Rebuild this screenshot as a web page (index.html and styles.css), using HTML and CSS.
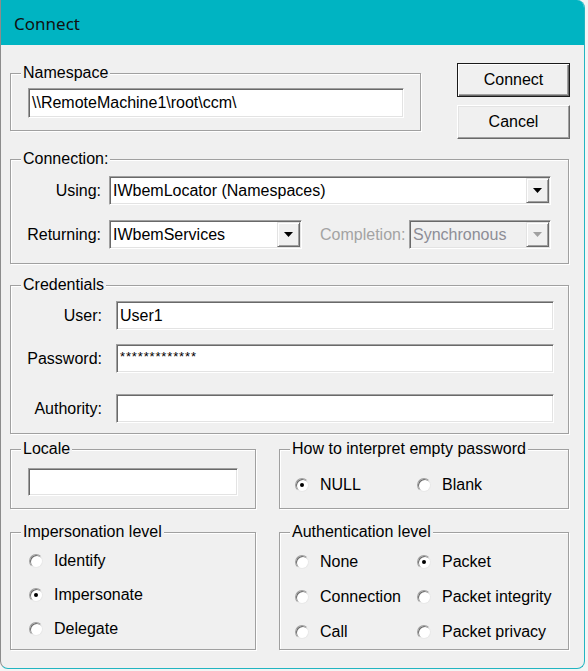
FILE: index.html
```html
<!DOCTYPE html>
<html>
<head>
<meta charset="utf-8">
<title>Connect</title>
<link rel="stylesheet" href="styles.css">
</head>
<body>
<div class="window">
  <div class="titlebar"><span class="title">Connect</span></div>
  <div class="content">
    <div class="top-row">
      <fieldset class="group ns">
        <legend>Namespace</legend>
        <div class="gbody ns-body">
          <div class="edit">\\RemoteMachine1\root\ccm\</div>
        </div>
      </fieldset>
      <div class="buttons">
        <button class="btn default">Connect</button>
        <button class="btn">Cancel</button>
      </div>
    </div>

    <fieldset class="group full conn">
      <legend>Connection:</legend>
      <div class="gbody conn-body">
        <div class="row">
          <span class="lbl">Using:</span>
          <div class="combo grow">
            <span class="ctext">IWbemLocator (Namespaces)</span>
            <span class="drop"><svg width="9" height="5" viewBox="0 0 9 5"><polygon points="0,0 9,0 4.5,5" fill="#000"/></svg></span>
          </div>
        </div>
        <div class="row">
          <span class="lbl">Returning:</span>
          <div class="combo ret">
            <span class="ctext">IWbemServices</span>
            <span class="drop"><svg width="9" height="5" viewBox="0 0 9 5"><polygon points="0,0 9,0 4.5,5" fill="#000"/></svg></span>
          </div>
          <span class="lbl-dis">Completion:</span>
          <div class="combo disabled">
            <span class="ctext">Synchronous</span>
            <span class="drop"><svg width="9" height="5" viewBox="0 0 9 5"><polygon points="0,0 9,0 4.5,5" fill="#a0a0a0"/></svg></span>
          </div>
        </div>
      </div>
    </fieldset>

    <fieldset class="group full cred">
      <legend>Credentials</legend>
      <div class="gbody cred-body">
        <div class="row">
          <span class="lbl wide">User:</span>
          <div class="edit grow">User1</div>
        </div>
        <div class="row">
          <span class="lbl wide">Password:</span>
          <div class="edit grow pw">*************</div>
        </div>
        <div class="row auth-row">
          <span class="lbl wide">Authority:</span>
          <div class="edit grow"></div>
        </div>
      </div>
    </fieldset>

    <div class="lower">
      <fieldset class="group">
        <legend>Locale</legend>
        <div class="gbody locale-body">
          <div class="edit locale"></div>
        </div>
      </fieldset>
      <fieldset class="group">
        <legend>How to interpret empty password</legend>
        <div class="gbody pw-body radios-2">
          <div class="radio-row"><span class="radio checked"></span>NULL</div>
          <div class="radio-row"><span class="radio"></span>Blank</div>
        </div>
      </fieldset>
      <fieldset class="group">
        <legend>Impersonation level</legend>
        <div class="gbody imp-body">
          <div class="radio-row"><span class="radio"></span>Identify</div>
          <div class="radio-row"><span class="radio checked"></span>Impersonate</div>
          <div class="radio-row"><span class="radio"></span>Delegate</div>
        </div>
      </fieldset>
      <fieldset class="group">
        <legend>Authentication level</legend>
        <div class="gbody authl-body radios-2">
          <div class="radio-row"><span class="radio"></span>None</div>
          <div class="radio-row"><span class="radio checked"></span>Packet</div>
          <div class="radio-row"><span class="radio"></span>Connection</div>
          <div class="radio-row"><span class="radio"></span>Packet integrity</div>
          <div class="radio-row"><span class="radio"></span>Call</div>
          <div class="radio-row"><span class="radio"></span>Packet privacy</div>
        </div>
      </fieldset>
    </div>
  </div>
</div>
</body>
</html>
```

FILE: styles.css
```css
* { box-sizing: border-box; }
html, body { margin: 0; padding: 0; }
body {
  background: #f4f4f4;
  font-family: "Liberation Sans", Arial, sans-serif;
  font-size: 16px;
  color: #000;
}
.window {
  width: 585px;
  height: 669px;
  background: #f0f0f0;
  border-left: 1px solid #8c8c8c;
  border-right: 1px solid #22b5c1;
  border-bottom: 1px solid #22b5c1;
  border-radius: 0 8px 8px 8px;
  overflow: hidden;
}
.titlebar {
  height: 45px;
  background: #00b4c2;
  display: flex;
  align-items: center;
  padding-left: 13px;
  padding-top: 1px;
}
.title {
  font-family: "Noto Sans", "Liberation Sans", sans-serif;
  font-size: 17px;
  color: #111;
}
.content {
  padding: 18px 0 0 9px;
}
.top-row {
  display: flex;
  align-items: flex-start;
}
.group {
  margin: 0;
  padding: 0;
  min-width: 0;
  border: 1px solid #a0a0a0;
  box-shadow: inset 1px 1px 0 #fff, 1px 1px 0 #fff;
}
.group legend {
  margin-left: 10px;
  padding: 0 2px;
  height: 18px;
  line-height: 18px;
  background: #f0f0f0;
}
.ns { width: 411px; margin-top: 1px; }
.ns-body { padding: 6px 16px 12px 17px; }
.buttons {
  margin-left: 36px;
  display: flex;
  flex-direction: column;
  gap: 8px;
}
.btn {
  width: 113px;
  height: 34px;
  padding: 0;
  background: #f0f0f0;
  font-family: "Liberation Sans", Arial, sans-serif;
  font-size: 16px;
  color: #000;
  border: 1px solid;
  border-color: #fff #696969 #696969 #fff;
  box-shadow: inset -1px -1px 0 #a0a0a0, inset 1px 1px 0 #e3e3e3;
}
.btn.default {
  border: 1px solid #1a1a1a;
  box-shadow: inset 1px 1px 0 #fff, inset -1px -1px 0 #696969, inset -2px -2px 0 #a0a0a0;
}
.full { width: 559px; }
.conn { margin-top: 11px; }
.conn-body { padding: 8px 17px 14px 0; display: flex; flex-direction: column; gap: 15px; }
.cred { margin-top: 12px; }
.cred-body { padding: 7px 14px 10px 0; display: flex; flex-direction: column; gap: 14px; }
.cred-body .auth-row { margin-top: 7px; }
.row {
  display: flex;
  align-items: center;
  height: 29px;
}
.lbl {
  width: 90px;
  margin-right: 8px;
  text-align: right;
  white-space: nowrap;
}
.lbl.wide { width: 91px; margin-right: 14px; }
.grow { flex: 1; }
.edit {
  height: 29px;
  background: #fff;
  border: 1px solid;
  border-color: #a0a0a0 #fff #fff #a0a0a0;
  box-shadow: inset 1px 1px 0 #696969, inset -1px -1px 0 #e3e3e3;
  padding-left: 3px;
  display: flex;
  align-items: center;
  white-space: nowrap;
}
.ns-body .edit { height: 30px; }
.edit.pw {
  font-size: 13px;
  letter-spacing: 0.85px;
  padding-bottom: 5px;
}
.combo {
  height: 29px;
  background: #fff;
  border: 1px solid;
  border-color: #a0a0a0 #fff #fff #a0a0a0;
  box-shadow: inset 1px 1px 0 #696969, inset -1px -1px 0 #e3e3e3;
  padding: 1px 1px 1px 3px;
  display: flex;
  align-items: center;
  white-space: nowrap;
}
.ctext { flex: 1; overflow: hidden; }
.drop {
  width: 23px;
  height: 25px;
  background: #f0f0f0;
  border: 1px solid;
  border-color: #e3e3e3 #696969 #696969 #e3e3e3;
  box-shadow: inset 1px 1px 0 #fff, inset -1px -1px 0 #a0a0a0;
  display: flex;
  align-items: center;
  justify-content: center;
}
.drop svg { display: block; }
.combo.ret { width: 193px; }
.lbl-dis {
  margin-left: 18px;
  color: #a3a3a3;
}
.combo.disabled {
  width: 142px;
  margin-left: auto;
  background: #f0f0f0;
  color: #8d8d96;
}
.lower {
  margin-top: 6px;
  display: grid;
  grid-template-columns: 246px 290px;
  column-gap: 23px;
  row-gap: 14px;
}
.locale-body { padding: 10px 0 12px 17px; }
.edit.locale { width: 210px; height: 28px; }
.radios-2 {
  display: grid;
  grid-template-columns: 122px auto;
  padding-left: 15px;
}
.pw-body { padding-top: 18px; }
.imp-body {
  padding: 11px 0 11px 18px;
  display: flex;
  flex-direction: column;
  gap: 16px;
}
.authl-body { padding-top: 12px; row-gap: 17px; }
.radio-row {
  display: flex;
  align-items: center;
  height: 18px;
  white-space: nowrap;
}
.radio {
  width: 14px;
  height: 14px;
  flex: none;
  border-radius: 50%;
  background: #fff;
  border: 1px solid;
  border-color: #a0a0a0 #e8e8e8 #e8e8e8 #a0a0a0;
  box-shadow: inset 1px 1px 0 #696969;
  margin-right: 11px;
  display: flex;
  align-items: center;
  justify-content: center;
}
.radio.checked::after {
  content: "";
  width: 4px;
  height: 4px;
  border-radius: 50%;
  background: #000;
}
```
